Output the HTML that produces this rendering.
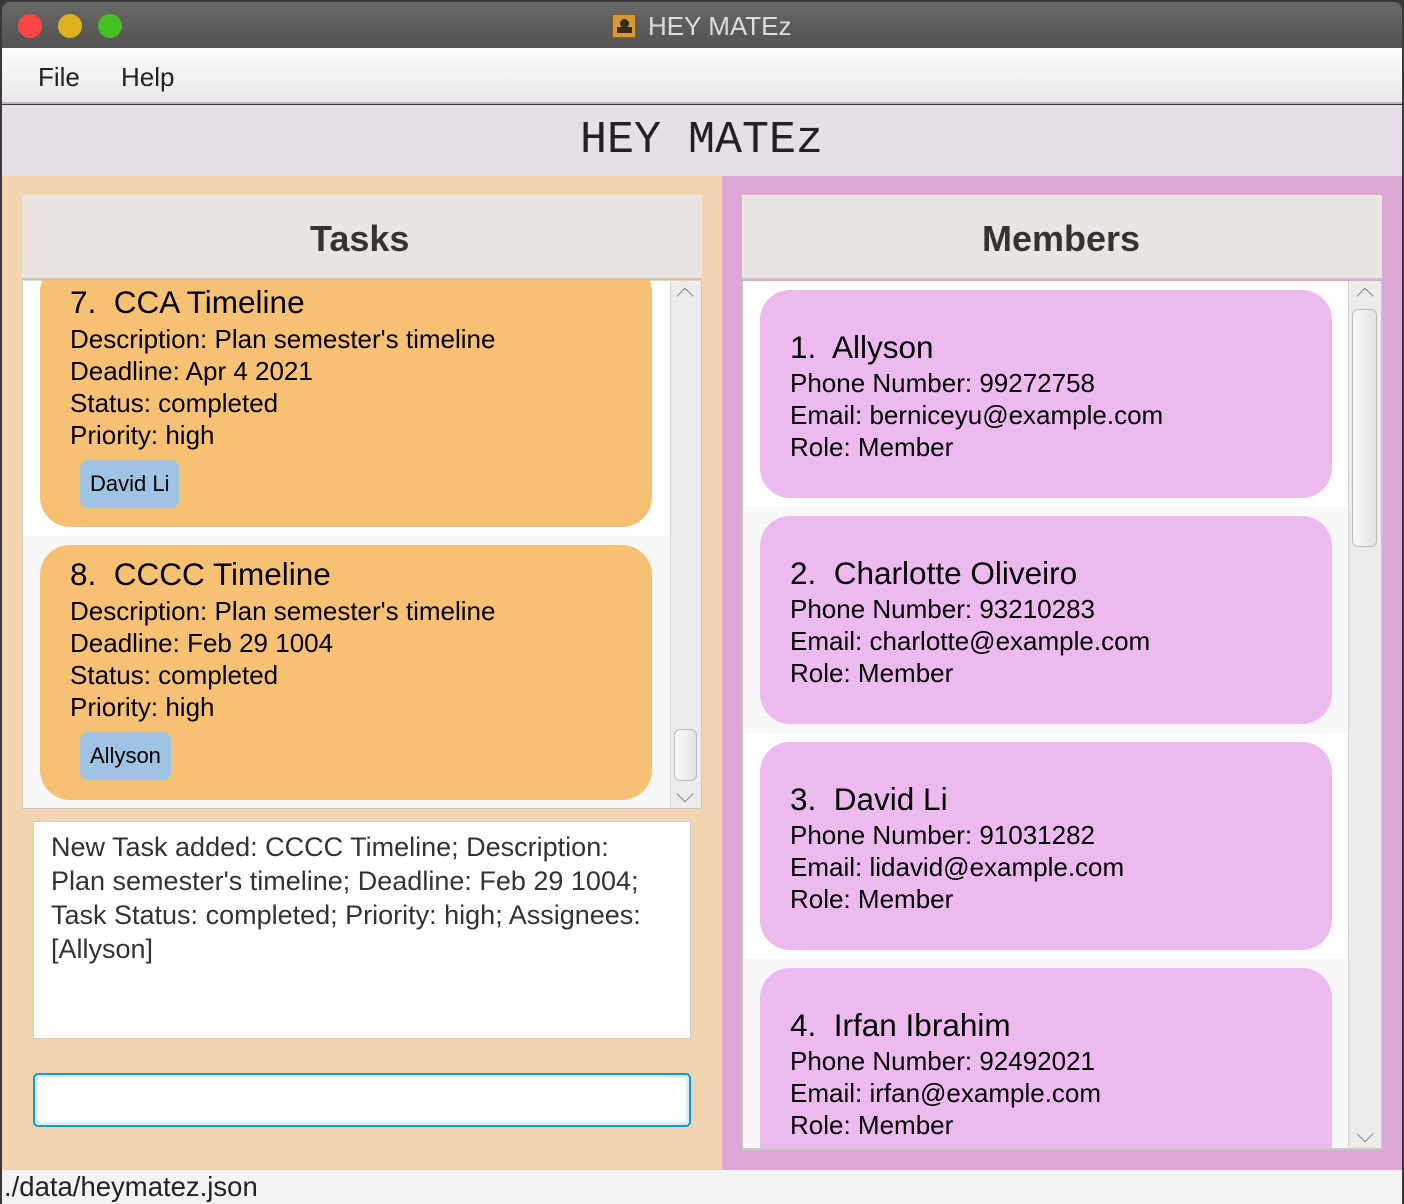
<!DOCTYPE html>
<html><head><meta charset="utf-8"><style>
*{margin:0;padding:0;box-sizing:border-box}
body{width:1404px;height:1204px;background:#3a3a3a;font-family:"Liberation Sans",Arial,sans-serif;position:relative;overflow:hidden}
.a{position:absolute}
.t{position:absolute;white-space:nowrap;color:#000}
.card{position:absolute;border-radius:30px}
.tc{background:#f6c173;left:40px;width:612px}
.mc{background:#edbaf0;left:760px;width:572px}
.ti{font-size:31.5px}
.bd{font-size:26px}
.tag{position:absolute;background:#9fc3e3;border-radius:8px;font-size:22px;padding:0 10px;height:48px;line-height:48px;color:#000}
.sb{position:absolute;background:#ececec;border-left:1px solid #d6d6d6}
.arr{position:absolute;width:12px;height:12px;border-left:1.5px solid #888;border-top:1.5px solid #888}
</style></head><body>
<div class="a" style="left:2px;top:2px;width:1400px;height:46px;background:linear-gradient(#6a6866,#555352);border-radius:8px 8px 0 0"></div>
<div class="a" style="left:18px;top:14px;width:24px;height:24px;border-radius:50%;background:#fc4643"></div>
<div class="a" style="left:58px;top:14px;width:24px;height:24px;border-radius:50%;background:#deb21f"></div>
<div class="a" style="left:98px;top:14px;width:24px;height:24px;border-radius:50%;background:#46bf22"></div>
<div class="a" style="left:612px;top:14px;width:24px;height:24px;background:#d39a3a;border:1px solid #8a5a1a"><div class="a" style="left:7px;top:4px;width:9px;height:9px;border-radius:50%;background:#3a2a10"></div><div class="a" style="left:4px;top:12px;width:15px;height:6px;background:#3a2a10"></div></div>
<div class="t" style="left:648px;top:11px;font-size:26px;color:#ddd">HEY MATEz</div>
<div class="a" style="left:2px;top:48px;width:1400px;height:56px;background:linear-gradient(#fcfcfc,#e9e9e9);border-bottom:2px solid #b8b8b8"></div>
<div class="t" style="left:38px;top:62px;font-size:26px;color:#222">File</div>
<div class="t" style="left:121px;top:62px;font-size:26px;color:#222">Help</div>
<div class="a" style="left:2px;top:105px;width:1400px;height:71px;background:#e6dfe7"></div>
<div class="t" style="left:580px;top:115px;font-size:45px;font-family:'Liberation Mono',monospace;color:#222">HEY MATEz</div>
<div class="a" style="left:2px;top:176px;width:720px;height:994px;background:#f0d5b0"></div>
<div class="a" style="left:722px;top:176px;width:680px;height:994px;background:#dea8d4"></div>
<div class="a" style="left:22px;top:281px;width:680px;height:528px;background:#fff;border:1px solid #c8c8c8;border-top:none;overflow:hidden">
 <div class="a" style="left:0;top:255px;width:648px;height:280px;background:#f8f8f8"></div>
</div>
<div class="card tc" style="top:262px;height:265px"></div>
<div class="a" style="left:22px;top:195px;width:680px;height:85px;background:#ebe5e1;border-bottom:2px solid #c8c8c8"></div>
<div class="t" style="left:310px;top:218px;font-size:36px;font-weight:bold;color:#333">Tasks</div>
<div class="t ti" style="left:70px;top:284px">7.&nbsp; CCA Timeline</div>
<div class="t bd" style="left:70px;top:324px">Description: Plan semester's timeline</div>
<div class="t bd" style="left:70px;top:356px">Deadline: Apr 4 2021</div>
<div class="t bd" style="left:70px;top:388px">Status: completed</div>
<div class="t bd" style="left:70px;top:420px">Priority: high</div>
<div class="tag" style="left:80px;top:460px">David Li</div>
<div class="card tc" style="top:545px;height:255px"></div>
<div class="t ti" style="left:70px;top:556px">8.&nbsp; CCCC Timeline</div>
<div class="t bd" style="left:70px;top:596px">Description: Plan semester's timeline</div>
<div class="t bd" style="left:70px;top:628px">Deadline: Feb 29 1004</div>
<div class="t bd" style="left:70px;top:660px">Status: completed</div>
<div class="t bd" style="left:70px;top:692px">Priority: high</div>
<div class="tag" style="left:80px;top:732px">Allyson</div>
<div class="sb" style="left:670px;top:281px;width:31px;height:527px"></div>
<div class="arr" style="left:679px;top:290px;transform:rotate(45deg)"></div>
<div class="arr" style="left:679px;top:788px;transform:rotate(225deg)"></div>
<div class="a" style="left:674px;top:729px;width:23px;height:52px;border-radius:6px;background:linear-gradient(90deg,#fafafa,#e4e4e4);border:1px solid #bbb"></div>
<div class="a" style="left:33px;top:821px;width:658px;height:218px;background:#fff;border:1px solid #ccc"></div>
<div class="a" style="left:51px;top:830px;font-size:27px;line-height:34px;color:#333;width:636px;white-space:nowrap">New Task added: CCCC Timeline; Description:<br>Plan semester's timeline; Deadline: Feb 29 1004;<br>Task Status: completed; Priority: high; Assignees:<br>[Allyson]</div>
<div class="a" style="left:33px;top:1073px;width:658px;height:54px;background:#fff;border:2px solid #0a9fd4;border-radius:5px;box-shadow:inset 0 0 0 3px #dcecf8"></div>
<div class="a" style="left:742px;top:195px;width:640px;height:85px;background:#ebe5e1;border-bottom:2px solid #c8c8c8"></div>
<div class="t" style="left:982px;top:218px;font-size:36px;font-weight:bold;color:#333">Members</div>
<div class="a" style="left:742px;top:281px;width:640px;height:868px;background:#fff;border:1px solid #c8c8c8;border-top:none;overflow:hidden">
 <div class="a" style="left:0;top:226px;width:606px;height:226px;background:#f8f8f8"></div>
 <div class="a" style="left:0;top:678px;width:606px;height:226px;background:#f8f8f8"></div>
</div>
<div class="card mc" style="top:290px;height:208px"></div>
<div class="t ti" style="left:790px;top:329px">1.&nbsp; Allyson</div>
<div class="t bd" style="left:790px;top:368px">Phone Number: 99272758</div>
<div class="t bd" style="left:790px;top:400px">Email: berniceyu@example.com</div>
<div class="t bd" style="left:790px;top:432px">Role: Member</div>
<div class="card mc" style="top:516px;height:208px"></div>
<div class="t ti" style="left:790px;top:555px">2.&nbsp; Charlotte Oliveiro</div>
<div class="t bd" style="left:790px;top:594px">Phone Number: 93210283</div>
<div class="t bd" style="left:790px;top:626px">Email: charlotte@example.com</div>
<div class="t bd" style="left:790px;top:658px">Role: Member</div>
<div class="card mc" style="top:742px;height:208px"></div>
<div class="t ti" style="left:790px;top:781px">3.&nbsp; David Li</div>
<div class="t bd" style="left:790px;top:820px">Phone Number: 91031282</div>
<div class="t bd" style="left:790px;top:852px">Email: lidavid@example.com</div>
<div class="t bd" style="left:790px;top:884px">Role: Member</div>
<div class="card mc" style="top:968px;height:181px;border-radius:30px 30px 0 0"></div>
<div class="t ti" style="left:790px;top:1007px">4.&nbsp; Irfan Ibrahim</div>
<div class="t bd" style="left:790px;top:1046px">Phone Number: 92492021</div>
<div class="t bd" style="left:790px;top:1078px">Email: irfan@example.com</div>
<div class="t bd" style="left:790px;top:1110px">Role: Member</div>
<div class="a" style="left:742px;top:1148px;width:640px;height:2px;background:#c8c8c8"></div>
<div class="sb" style="left:1348px;top:281px;width:33px;height:867px"></div>
<div class="arr" style="left:1359px;top:290px;transform:rotate(45deg)"></div>
<div class="arr" style="left:1359px;top:1128px;transform:rotate(225deg)"></div>
<div class="a" style="left:1352px;top:309px;width:25px;height:238px;border-radius:6px;background:linear-gradient(90deg,#fafafa,#e4e4e4);border:1px solid #bbb"></div>
<div class="a" style="left:2px;top:1170px;width:1400px;height:34px;background:#f3f3f3"></div>
<div class="t" style="left:4px;top:1171px;font-size:27.5px;color:#222">./data/heymatez.json</div>
</body></html>
